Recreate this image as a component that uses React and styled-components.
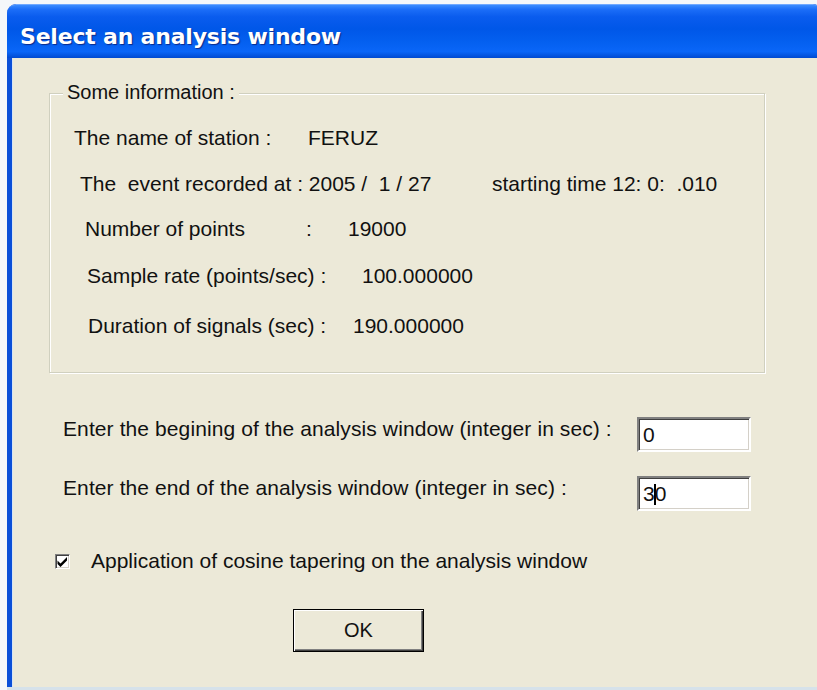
import styled, { createGlobalStyle } from "styled-components";

const GlobalStyle = createGlobalStyle`
  html, body {
    margin: 0;
    padding: 0;
    background: #F4F7FA;
  }
  * {
    box-sizing: border-box;
  }
`;

// each cell: [text, width of the cell (0 = natural)]
const info = [
  { indent: 73, top: 0, parts: [["The name of station :", 234], ["FERUZ", 0]] },
  { indent: 79, top: 20, parts: [["The  event recorded at : 2005 /  1 / 27", 412], ["starting time 12: 0:  .010", 0]] },
  { indent: 84, top: 19, parts: [["Number of points", 221], [":", 42], ["19000", 0]] },
  { indent: 86, top: 21, parts: [["Sample rate (points/sec) :", 275], ["100.000000", 0]] },
  { indent: 87, top: 24, parts: [["Duration of signals (sec) :", 265], ["190.000000", 0]] },
];

function App() {
  return (
    <Page>
      <GlobalStyle />
      <Window>
        <TitleBar>
          <Title>Select an analysis window</Title>
        </TitleBar>

        <Body>
          <Group>
            <Legend>Some information :</Legend>
            {info.map((row, i) => (
              <InfoRow key={i} $indent={row.indent} $top={row.top}>
                {row.parts.map(([text, w], j) => (
                  <Cell key={j} $w={w}>{text}</Cell>
                ))}
              </InfoRow>
            ))}
          </Group>

          <Fields>
            <FieldRow>
              <FieldLabel>Enter the begining of the analysis window (integer in sec) :</FieldLabel>
              <Edit>0</Edit>
            </FieldRow>
            <FieldRow>
              <FieldLabel>Enter the end of the analysis window (integer in sec) :</FieldLabel>
              <Edit>
                3<Caret />0
              </Edit>
            </FieldRow>
          </Fields>

          <CheckRow>
            <CheckBox>
              <svg width="11" height="11" viewBox="0 0 11 11">
                <path d="M0.5 4.5 L3.5 7.5 L10 1 L10 4.5 L3.5 11 L0.5 8 Z" fill="#000" />
              </svg>
            </CheckBox>
            <CheckLabel>Application of cosine tapering on the analysis window</CheckLabel>
          </CheckRow>

          <ButtonRow>
            <OkButton>OK</OkButton>
          </ButtonRow>
        </Body>
      </Window>
    </Page>
  );
}

export default App;

const Page = styled.div`
  width: 817px;
  height: 690px;
  padding: 4px 0 0 7px;
  overflow: hidden;
`;

const Window = styled.div`
  width: 815px;
  height: 686px;
  display: flex;
  flex-direction: column;
  border-radius: 9px 9px 0 0;
  background: #0A4FD8;
  padding: 0 0 3px 5px;
  overflow: hidden;
  box-shadow: inset 0 -3px 0 #D6E2EA;
`;

const TitleBar = styled.div`
  height: 54px;
  margin-left: -5px;
  display: flex;
  align-items: center;
  padding-left: 13px;
  border-radius: 9px 9px 0 0;
  border-top: 1px solid #6FA8FF;
  background: linear-gradient(
    to bottom,
    #3A8CFF 0%,
    #1C6EF8 8%,
    #0A5CEE 22%,
    #0057E8 45%,
    #0460F0 70%,
    #0A66F8 88%,
    #004AD0 100%
  );
`;

const Title = styled.div`
  color: #FFF;
  font-family: "DejaVu Sans", Verdana, sans-serif;
  font-size: 22px;
  font-weight: 700;
  letter-spacing: -0.2px;
  text-shadow: 1px 1px 1px #0A2A8A;
  margin-top: 10px;
`;

const Body = styled.div`
  flex: 1;
  background: #ECE9D8;
  padding: 35px 0 0 36px;
  display: flex;
  flex-direction: column;
  border-left: 1px solid #D6E4F4;
  font-family: "Liberation Sans", Arial, sans-serif;
  font-size: 21px;
  color: #111;
`;

const Group = styled.fieldset`
  position: relative;
  width: 716px;
  height: 280px;
  margin: 0;
  padding: 31px 0 0 0;
  border: 1px solid #D0D0BF;
  box-shadow: inset 1px 1px 0 #FFF, 1px 1px 0 #FFF;
`;

const Legend = styled.div`
  position: absolute;
  top: -13px;
  left: 13px;
  padding: 0 4px;
  background: #ECE9D8;
  color: #111;
  font-size: 20px;
`;

const InfoRow = styled.div`
  display: flex;
  align-items: center;
  height: 26px;
  margin-top: ${(p) => p.$top}px;
  padding-left: ${(p) => p.$indent - 49}px;
  white-space: pre;
`;

const Cell = styled.span`
  flex: none;
  width: ${(p) => (p.$w ? `${p.$w}px` : "auto")};
`;

const Fields = styled.div`
  display: flex;
  flex-direction: column;
  gap: 24px;
  margin-top: 44px;
  padding-left: 14px;
`;

const FieldRow = styled.div`
  display: flex;
  align-items: flex-start;
  justify-content: space-between;
  width: 688px;
`;

const FieldLabel = styled.span`
  letter-spacing: 0.1px;
`;

const Edit = styled.div`
  position: relative;
  width: 114px;
  height: 35px;
  background: #FFF;
  border-style: solid;
  border-width: 2px;
  border-color: #808080 #FFF #FFF #808080;
  box-shadow: inset 1px 1px 0 #404040, inset -1px -1px 0 #D4D0C8;
  padding: 5px 0 0 4px;
  line-height: 22px;
`;

const Caret = styled.span`
  display: inline-block;
  width: 2px;
  height: 21px;
  margin: 0 -1px;
  vertical-align: -4px;
  background: #000;
`;

const CheckRow = styled.div`
  display: flex;
  align-items: center;
  margin-top: 38px;
  padding-left: 6px;
`;

const CheckBox = styled.div`
  width: 15px;
  height: 15px;
  display: flex;
  align-items: center;
  justify-content: center;
  background: #FFF;
  border-style: solid;
  border-width: 1px;
  border-color: #808080 #FFF #FFF #808080;
  box-shadow: inset 1px 1px 0 #404040, inset -1px -1px 0 #D4D0C8;
`;

const CheckLabel = styled.span`
  margin-left: 21px;
`;

const ButtonRow = styled.div`
  display: flex;
  padding-left: 244px;
  margin-top: 36px;
`;

const OkButton = styled.button`
  width: 131px;
  height: 43px;
  background: #ECE9D8;
  border: 1px solid #000;
  box-shadow: inset 1px 1px 0 #FFF, inset -1px -1px 0 #404040, inset -2px -2px 0 #808080;
  font-family: "Liberation Sans", Arial, sans-serif;
  font-size: 20px;
  color: #111;
  padding: 0;
`;
